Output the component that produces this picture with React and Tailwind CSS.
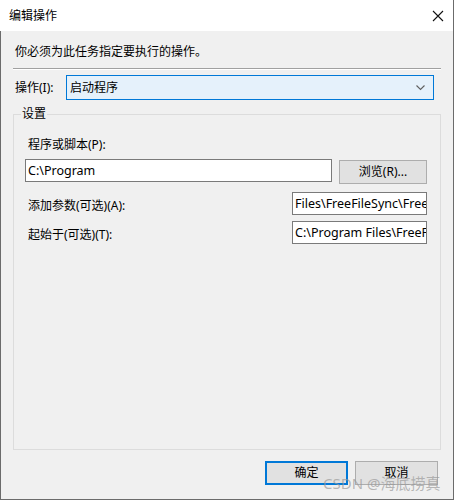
import React from "react";

const font = { fontFamily: '"Noto Sans", "Noto Sans CJK SC", sans-serif' };

const TextBox = ({ value, className = "" }) => (
  <div
    className={`h-[23px] border border-[#7a7a7a] bg-white pl-[2px] overflow-hidden whitespace-nowrap text-[12.5px] leading-[21px] text-black ${className}`}
  >
    {value}
  </div>
);

const EditAction = () => {
  return (
    <div
      className="relative w-[454px] h-[500px] flex flex-col bg-[#f0f0f0] border-r border-b border-[#6b6b6b] text-[12px] text-black"
      style={font}
    >
      {/* title bar */}
      <div className="h-[31px] flex items-center justify-between bg-white pl-[9px] pr-[10px]">
        <span className="leading-[16px]">编辑操作</span>
        <svg width="12" height="12" viewBox="0 0 12 12" className="mr-[-1px]">
          <path d="M1 1 L11 11 M11 1 L1 11" stroke="#111" strokeWidth="1.1" fill="none" />
        </svg>
      </div>

      <div className="flex-1 flex flex-col border-l border-[#6b6b6b]">
        <p className="pl-[14px] pt-[13px] leading-[16px]">你必须为此任务指定要执行的操作。</p>

        <div className="ml-[12px] w-[428px] mt-[8px] border-t border-[#a0a0a0] border-b border-b-white" />

        <div className="flex items-center mt-[5px] pl-[14px]">
          <span className="w-[51px] leading-[16px]">操作(I):</span>
          <div className="w-[368px] h-[25px] flex items-center justify-between bg-[#e5f1fb] border border-[#0078d7] pl-[3px] pr-[8px]">
            <span className="leading-[16px]">启动程序</span>
            <svg width="9" height="6" viewBox="0 0 9 6">
              <path d="M0.5 0.5 L4.5 4.5 L8.5 0.5" stroke="#606060" strokeWidth="1.1" fill="none" />
            </svg>
          </div>
        </div>

        {/* settings group */}
        <div className="relative ml-[12px] mt-[14px] w-[428px] h-[336px] border border-[#dcdcdc] pl-[11px] pr-[13px] pt-[22px]">
          <span className="absolute left-[7px] top-[-9px] px-[1px] bg-[#f0f0f0] leading-[16px]">设置</span>

          <div className="pl-[3px] leading-[16px]">程序或脚本(P):</div>
          <div className="flex items-start justify-between mt-[6px]">
            <TextBox value="C:\Program" className="w-[307px]" />
            <button className="w-[88px] h-[24px] mt-[1px] bg-[#e1e1e1] border border-[#adadad] leading-[16px]">
              浏览(R)...
            </button>
          </div>

          <div className="flex items-center justify-between mt-[8px]">
            <span className="pl-[3px] pt-[4px] leading-[16px]">添加参数(可选)(A):</span>
            <TextBox value="Files\FreeFileSync\FreeFileSync.exe" className="w-[135px]" />
          </div>

          <div className="flex items-center justify-between mt-[6px]">
            <span className="pl-[3px] pt-[4px] leading-[16px]">起始于(可选)(T):</span>
            <TextBox value="C:\Program Files\FreeFileSync" className="w-[135px]" />
          </div>
        </div>

        <div className="flex justify-end gap-[7px] mt-[11px] pr-[15px]">
          <button className="w-[83px] h-[24px] bg-[#e1e1e1] border-2 border-[#0078d7] leading-[16px]">确定</button>
          <button className="w-[83px] h-[24px] bg-[#e1e1e1] border border-[#adadad] leading-[16px]">取消</button>
        </div>
      </div>

      <span className="absolute left-[323px] top-[474px] text-[15px] leading-[18px] text-[#9a9a9a]/70 pointer-events-none">
        CSDN @海底捞真
      </span>
    </div>
  );
};

export default function App() {
  return <EditAction />;
}
